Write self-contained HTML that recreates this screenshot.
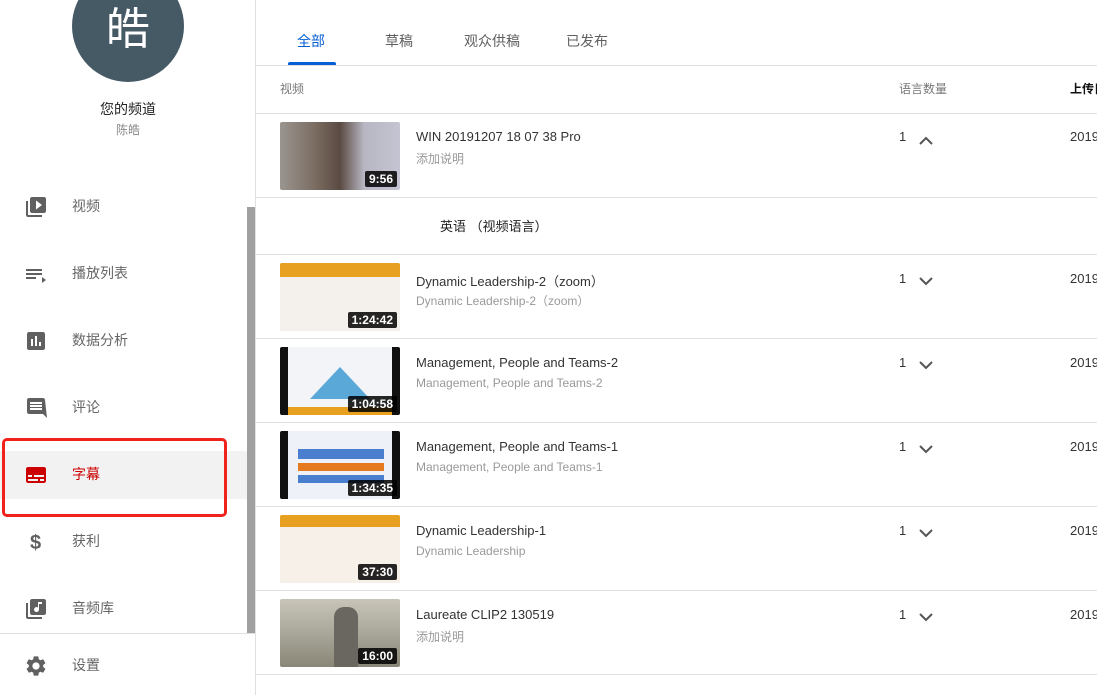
<!DOCTYPE html>
<html><head><meta charset="utf-8"><style>
*{margin:0;padding:0;box-sizing:border-box}
body{width:1097px;height:695px;overflow:hidden;background:#fff;font-family:"Liberation Sans","Noto Sans CJK SC",sans-serif;position:relative}
.side{position:absolute;left:0;top:0;width:256px;height:695px;border-right:1px solid #e0e0e0}
.av{position:absolute;left:72px;top:-30px;width:112px;height:112px;border-radius:50%;background:#465a66;color:#fff;font-size:44px;text-align:center;line-height:112px;padding-top:4px}
.nm{position:absolute;top:99px;width:256px;text-align:center;font-size:14px;color:#222}
.sub{position:absolute;top:121px;width:256px;text-align:center;font-size:12px;color:#888}
.it{position:absolute;left:0;width:247px;height:46px;font-size:14px;color:#666}
.it svg{position:absolute;left:24px;top:11px}
.it span{position:absolute;left:72px;top:12px}
.sb{position:absolute;left:247px;top:207px;width:8px;height:426px;background:#a0a0a0}
.hl{position:absolute;left:0;top:633px;width:256px;border-top:1px solid #e0e0e0}
.red{position:absolute;left:2px;top:438px;width:225px;height:79px;border:3px solid #f0231c;border-radius:5px}
.tab{position:absolute;top:31px;font-size:14px;color:#606060}
.line{position:absolute;left:256px;right:0;border-top:1px solid #e0e0e0}
.th{position:absolute;left:280px;width:120px;height:68px;border-radius:2px;overflow:hidden}
.dur{position:absolute;right:3px;bottom:3px;background:rgba(0,0,0,.85);color:#fff;font-size:12px;font-weight:bold;padding:1px 4px;border-radius:2px}
.t1{position:absolute;left:416px;font-size:13px;color:#333;white-space:nowrap}
.t2{position:absolute;left:416px;font-size:12px;color:#999;white-space:nowrap}
.n{position:absolute;left:899px;font-size:13px;color:#333}
.ch{position:absolute;left:919px}
.yr{position:absolute;left:1070px;font-size:13px;color:#333}
</style></head><body>
<div class="side">
<div class="av">皓</div>
<div class="nm">您的频道</div>
<div class="sub">陈皓</div>
<div class="it" style="top:184px"><svg width="24" height="24" viewBox="0 0 24 24"><path fill="#606060" d="M4 6H2v14c0 1.1.9 2 2 2h14v-2H4V6zm16-4H8c-1.1 0-2 .9-2 2v12c0 1.1.9 2 2 2h12c1.1 0 2-.9 2-2V4c0-1.1-.9-2-2-2zm-8 12.5v-9l6 4.5-6 4.5z"/></svg><span>视频</span></div>
<div class="it" style="top:251px"><svg width="24" height="24" viewBox="0 0 24 24"><path fill="#606060" d="M2 7h16v2H2zM2 11h16v2H2zM2 15h10v2H2zM18 15l4 3-4 3z"/></svg><span>播放列表</span></div>
<div class="it" style="top:318px"><svg width="24" height="24" viewBox="0 0 24 24"><path fill="#606060" d="M19 3H5c-1.1 0-2 .9-2 2v14c0 1.1.9 2 2 2h14c1.1 0 2-.9 2-2V5c0-1.1-.9-2-2-2zM9 17H7v-7h2v7zm4 0h-2V7h2v10zm4 0h-2v-4h2v4z"/></svg><span>数据分析</span></div>
<div class="it" style="top:385px"><svg width="24" height="24" viewBox="0 0 24 24"><path fill="#606060" d="M21 4c0-1.1-.9-2-2-2H5c-1.1 0-2 .9-2 2v12c0 1.1.9 2 2 2h14l4 4-2-18zM18 14H6v-2h12v2zm0-3H6V9h12v2zm0-3H6V6h12v2z"/></svg><span>评论</span></div>
<div class="it" style="top:451px;background:#f2f2f2;height:48px"><svg width="24" height="24" viewBox="0 0 24 24" style="top:12px"><path fill="#cc0000" d="M20 4H4c-1.1 0-2 .9-2 2v12c0 1.1.9 2 2 2h16c1.1 0 2-.9 2-2V6c0-1.1-.9-2-2-2zM4 12h4v2H4v-2zm10 6H4v-2h10v2zm6 0h-4v-2h4v2zm0-4H10v-2h10v2z"/></svg><span style="color:#cc0000;top:13px">字幕</span></div>
<div class="it" style="top:519px"><svg width="24" height="24" viewBox="0 0 24 24"><text x="6" y="19" font-size="20" font-weight="bold" fill="#606060" font-family="Liberation Sans">$</text></svg><span>获利</span></div>
<div class="it" style="top:586px"><svg width="24" height="24" viewBox="0 0 24 24"><path fill="#606060" d="M20 2H8c-1.1 0-2 .9-2 2v12c0 1.1.9 2 2 2h12c1.1 0 2-.9 2-2V4c0-1.1-.9-2-2-2zm-2 5h-3v5.5a2.5 2.5 0 1 1-1-2V5h4v2zM4 6H2v14c0 1.1.9 2 2 2h14v-2H4V6z"/></svg><span>音频库</span></div>
<div class="it" style="top:643px"><svg width="24" height="24" viewBox="0 0 24 24"><path fill="#606060" d="M19.14 12.94c.04-.3.06-.61.06-.94 0-.32-.02-.64-.07-.94l2.03-1.58a.49.49 0 0 0 .12-.61l-1.920-3.32a.488.488 0 0 0-.59-.22l-2.39.96c-.5-.38-1.03-.7-1.62-.94l-.36-2.54a.484.484 0 0 0-.48-.41h-3.84c-.24 0-.43.17-.47.41l-.36 2.54c-.59.24-1.130.57-1.62.94l-2.39-.96c-.22-.08-.47 0-.59.22L2.74 8.87c-.12.21-.08.47.12.61l2.03 1.58c-.05.3-.09.63-.09.94s.02.64.07.94l-2.03 1.58a.49.49 0 0 0-.12.61l1.92 3.32c.12.22.37.29.59.22l2.39-.96c.5.38 1.03.7 1.62.94l.36 2.54c.05.24.24.41.48.41h3.84c.24 0 .44-.17.47-.41l.36-2.54c.59-.24 1.13-.56 1.62-.94l2.39.96c.22.08.47 0 .59-.22l1.92-3.32c.12-.22.07-.47-.12-.61l-2.01-1.58zM12 15.6c-1.98 0-3.6-1.62-3.6-3.6s1.62-3.6 3.6-3.6 3.6 1.62 3.6 3.6-1.62 3.6-3.6 3.6z"/></svg><span>设置</span></div>
<div class="sb"></div>
<div class="hl"></div>
<div class="red"></div>
</div>

<div class="tab" style="left:297px;color:#065fd4">全部</div>
<div style="position:absolute;left:288px;top:62px;width:48px;height:3px;background:#065fd4;border-radius:2px 2px 0 0"></div>
<div class="tab" style="left:385px">草稿</div>
<div class="tab" style="left:464px">观众供稿</div>
<div class="tab" style="left:566px">已发布</div>
<div class="line" style="top:65px"></div>
<div style="position:absolute;left:280px;top:80px;font-size:12px;color:#777">视频</div>
<div style="position:absolute;left:899px;top:80px;font-size:12px;color:#777">语言数量</div>
<div style="position:absolute;left:1070px;top:80px;font-size:12px;color:#111;font-weight:bold;white-space:nowrap">上传日期</div>
<div class="line" style="top:113px"></div>

<div class="th" style="top:122px;background:linear-gradient(90deg,#9a9590,#7a6b60 30%,#5a4a42 50%,#b7b6c2 70%,#c4c4d2)"><div class="dur">9:56</div></div>
<div class="t1" style="top:129px">WIN 20191207 18 07 38 Pro</div><div class="t2" style="top:150px">添加说明</div>
<div class="n" style="top:129px">1</div><svg class="ch" style="top:128px" width="14" height="24" viewBox="0 0 14 24"><path d="M1 16l6-6 6 6" stroke="#555" stroke-width="2" fill="none"/></svg><div class="yr" style="top:129px">2019</div>
<div class="line" style="top:197px"></div>
<div style="position:absolute;left:440px;top:216px;font-size:13px;color:#222">英语 （视频语言）</div>
<div class="line" style="top:254px"></div>

<div class="th" style="top:263px;background:linear-gradient(180deg,#e8a020 0,#e8a020 14px,#f4f0ec 14px)"><div class="dur">1:24:42</div></div>
<div class="t1" style="top:271px">Dynamic Leadership-2（zoom）</div><div class="t2" style="top:292px">Dynamic Leadership-2（zoom）</div>
<div class="n" style="top:271px">1</div><svg class="ch" style="top:270px" width="14" height="24" viewBox="0 0 14 24"><path d="M1 8l6 6 6-6" stroke="#555" stroke-width="2" fill="none"/></svg><div class="yr" style="top:271px">2019</div>
<div class="line" style="top:338px"></div>

<div class="th" style="top:347px;background:linear-gradient(90deg,#111 0,#111 8px,#f2f4f8 8px,#f2f4f8 112px,#111 112px)"><div style="position:absolute;left:30px;top:20px;width:0;height:0;border-left:30px solid transparent;border-right:30px solid transparent;border-bottom:32px solid #5aa8d8"></div><div style="position:absolute;left:8px;bottom:0;width:104px;height:8px;background:#e8a020"></div><div class="dur">1:04:58</div></div>
<div class="t1" style="top:355px">Management, People and Teams-2</div><div class="t2" style="top:376px">Management, People and Teams-2</div>
<div class="n" style="top:355px">1</div><svg class="ch" style="top:354px" width="14" height="24" viewBox="0 0 14 24"><path d="M1 8l6 6 6-6" stroke="#555" stroke-width="2" fill="none"/></svg><div class="yr" style="top:355px">2019</div>
<div class="line" style="top:422px"></div>

<div class="th" style="top:431px;background:linear-gradient(90deg,#111 0,#111 8px,#eef2f8 8px,#eef2f8 112px,#111 112px)"><div style="position:absolute;left:18px;top:18px;width:86px;height:10px;background:#4a7fd0"></div><div style="position:absolute;left:18px;top:32px;width:86px;height:8px;background:#e67a20"></div><div style="position:absolute;left:18px;top:44px;width:86px;height:8px;background:#4a7fd0"></div><div class="dur">1:34:35</div></div>
<div class="t1" style="top:439px">Management, People and Teams-1</div><div class="t2" style="top:460px">Management, People and Teams-1</div>
<div class="n" style="top:439px">1</div><svg class="ch" style="top:438px" width="14" height="24" viewBox="0 0 14 24"><path d="M1 8l6 6 6-6" stroke="#555" stroke-width="2" fill="none"/></svg><div class="yr" style="top:439px">2019</div>
<div class="line" style="top:506px"></div>

<div class="th" style="top:515px;background:linear-gradient(180deg,#e8a020 0,#e8a020 12px,#f6f0e8 12px)"><div class="dur">37:30</div></div>
<div class="t1" style="top:523px">Dynamic Leadership-1</div><div class="t2" style="top:544px">Dynamic Leadership</div>
<div class="n" style="top:523px">1</div><svg class="ch" style="top:522px" width="14" height="24" viewBox="0 0 14 24"><path d="M1 8l6 6 6-6" stroke="#555" stroke-width="2" fill="none"/></svg><div class="yr" style="top:523px">2019</div>
<div class="line" style="top:590px"></div>

<div class="th" style="top:599px;background:linear-gradient(180deg,#c8c4b8,#a8a89a 50%,#8a8678)"><div style="position:absolute;left:54px;top:8px;width:24px;height:60px;background:#6a6660;border-radius:10px 10px 0 0"></div><div class="dur">16:00</div></div>
<div class="t1" style="top:607px">Laureate CLIP2 130519</div><div class="t2" style="top:628px">添加说明</div>
<div class="n" style="top:607px">1</div><svg class="ch" style="top:606px" width="14" height="24" viewBox="0 0 14 24"><path d="M1 8l6 6 6-6" stroke="#555" stroke-width="2" fill="none"/></svg><div class="yr" style="top:607px">2019</div>
<div class="line" style="top:674px"></div>
</body></html>
